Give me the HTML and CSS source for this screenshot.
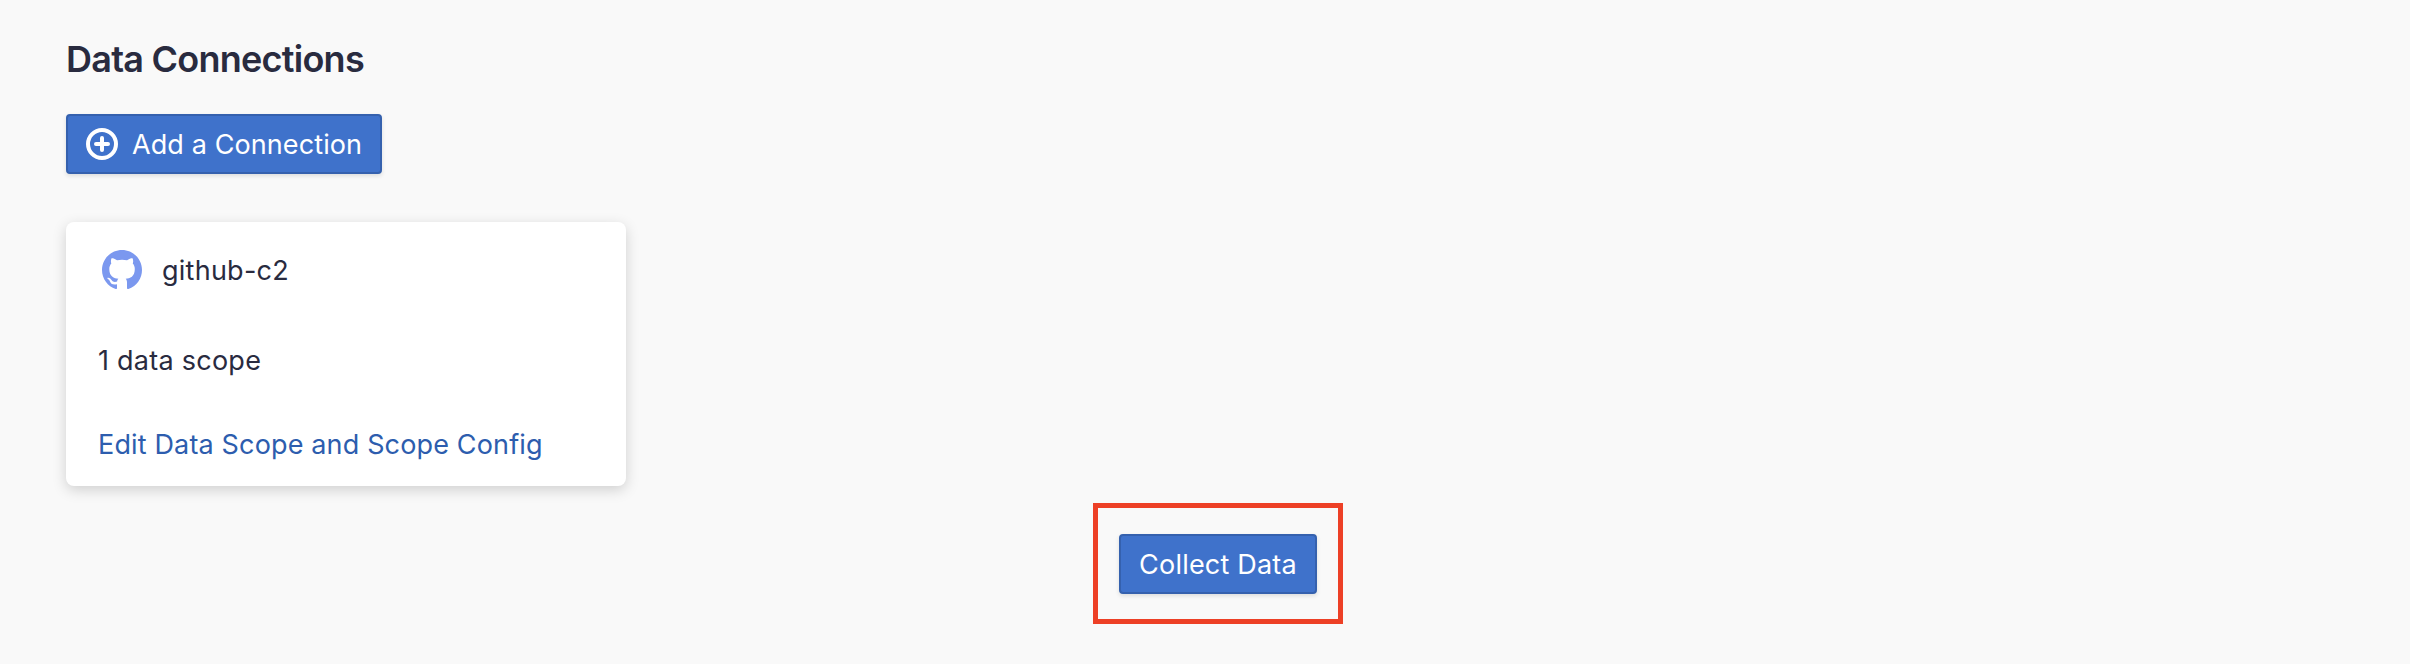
FILE: index.html
```html
<!DOCTYPE html>
<html lang="en">
<head>
<meta charset="utf-8">
<title>Data Connections</title>
<link rel="stylesheet" href="styles.css">
</head>
<body>
<main class="page">
  <h1 class="title"><span>Data Connections</span></h1>
  <button class="btn btn-add" type="button">
    <svg class="add-icon" viewBox="0 0 32 32" aria-hidden="true">
      <circle cx="16" cy="16" r="14" fill="none" stroke="#fff" stroke-width="4"/>
      <path d="M16 10v12M10 16h12" stroke="#fff" stroke-width="4" stroke-linecap="round"/>
    </svg>
    <span class="add-label">Add a Connection</span>
  </button>
  <section class="card">
    <div class="card-head">
      <svg class="github" viewBox="0 0 16 16" aria-hidden="true"><path fill="#7b98ef" d="M8 0C3.58 0 0 3.58 0 8c0 3.54 2.29 6.53 5.47 7.59.4.07.55-.17.55-.38 0-.19-.01-.82-.01-1.49-2.01.37-2.53-.49-2.69-.94-.09-.23-.48-.94-.82-1.13-.28-.15-.68-.52-.01-.53.63-.01 1.08.58 1.23.82.72 1.21 1.87.87 2.33.66.07-.52.28-.87.51-1.07-1.78-.2-3.64-.89-3.64-3.95 0-.87.31-1.59.82-2.15-.08-.2-.36-1.02.08-2.12 0 0 .67-.21 2.2.82.64-.18 1.32-.27 2-.27s1.36.09 2 .27c1.53-1.04 2.2-.82 2.2-.82.44 1.1.16 1.92.08 2.12.51.56.82 1.27.82 2.15 0 3.07-1.87 3.75-3.65 3.95.29.25.54.73.54 1.48 0 1.07-.01 1.93-.01 2.2 0 .21.15.46.55.38A8.01 8.01 0 0 0 16 8c0-4.42-3.58-8-8-8z"/></svg>
      <span class="name">github-c2</span>
    </div>
    <div class="scope">1 data scope</div>
    <a class="edit">Edit Data Scope and Scope Config</a>
  </section>
  <div class="highlight">
    <button class="btn btn-collect" type="button"><span class="collect-label">Collect Data</span></button>
  </div>
</main>
</body>
</html>
```
FILE: styles.css
```css
* { box-sizing: border-box; }
body {
  margin: 0;
  background: #f9f9f9;
  color: #292b3f;
  font: 27px/36px Inter, "Liberation Sans", sans-serif;
  white-space: nowrap;
}
.page {
  height: 664px;
  padding: 37px 66px 0;
  display: flex;
  flex-direction: column;
  align-items: flex-start;
}
.title {
  margin: 0 0 33px;
  font-size: 36px;
  line-height: 44px;
  font-weight: 600;
  letter-spacing: -0.75px;
}
.btn {
  display: flex;
  align-items: center;
  height: 60px;
  padding: 2px 18px 0;
  border: 2px solid #3561ae;
  border-radius: 4px;
  background: #3f72cb;
  box-shadow: 0 2px 4px rgba(16, 22, 26, .12);
  color: #fff;
  font: inherit;
}
.btn-add { width: 316px; gap: 14px; letter-spacing: .1px; }
.add-icon { width: 32px; height: 32px; flex: none; margin-bottom: 2px; }
.card {
  width: 560px;
  height: 264px;
  margin-top: 48px;
  padding: 28px 32px 0;
  border-radius: 8px;
  background: #fff;
  box-shadow: 0 4px 14px rgba(0, 0, 0, .17);
}
.card-head {
  display: flex;
  align-items: center;
  height: 40px;
  margin-bottom: 53px;
  padding-left: 4px;
  gap: 20px;
}
.github { width: 40px; height: 40px; flex: none; }
.name { padding-top: 2px; letter-spacing: .25px; }
.scope { margin-bottom: 48px; letter-spacing: .25px; }
.edit { display: block; color: #2d5dae; letter-spacing: .15px; }
.highlight {
  width: 250px;
  height: 121px;
  margin: 17px 0 0 1027px;
  padding: 26px 21px 0;
  border: 5px solid #ed4026;
}
.btn-collect { width: 198px; justify-content: center; letter-spacing: .2px; }
```
